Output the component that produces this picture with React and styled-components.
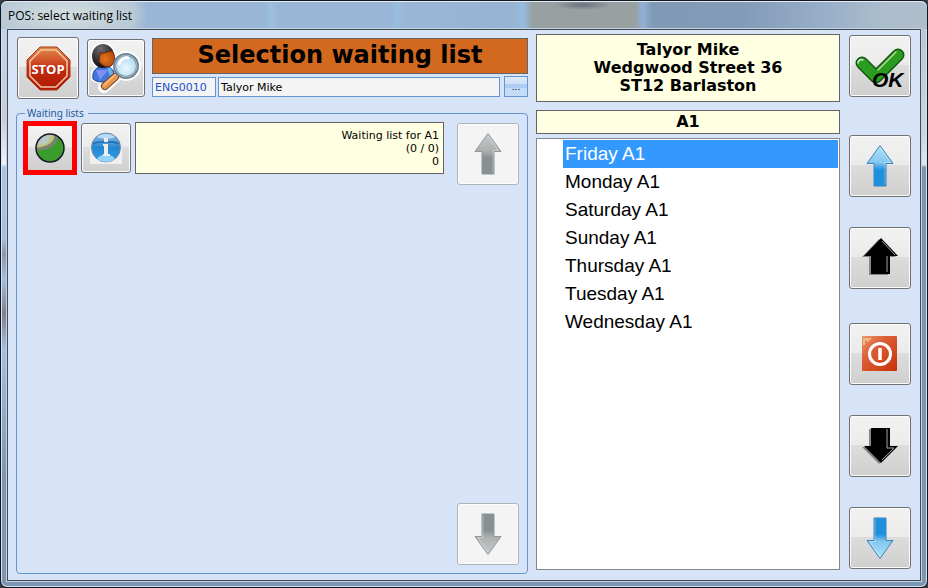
import { useState } from 'react';
import styled, { createGlobalStyle, css } from 'styled-components';

const GlobalStyle = createGlobalStyle`
    * {
        box-sizing: border-box;
    }

    body {
        margin: 0;
        background: #3a3d44;
        font-family: "DejaVu Sans", Verdana, sans-serif;
        font-size: 11px;
        color: #000;
    }
`;

const Window = styled.div`
    display: flex;
    flex-direction: column;
    min-height: 100vh;
    border: 1px solid #14161f;
    border-radius: 7px;
    box-shadow: inset 0 0 0 1px #d3e2ee;
    background:
        linear-gradient(180deg, #b9c8d8 0, #c9d6e2 100px, #dbe7f0 136px, #7c97b3 138px, #7c97b3 100%) right 1px top 28px / 6px 100% no-repeat,
        linear-gradient(180deg, #c3d3f0 0, #c8ccd8 90px, #eef3fa 135px, #a9c6e8 138px, #a3bfe2 210px, #8c97ac 225px, #a3bfe2 250px, #857f8c 285px, #a3bfe2 320px, #7d95b0 450px) left 1px top 28px / 6px 100% no-repeat,
        #7c97b3;
`;

const TitleBar = styled.header`
    display: flex;
    align-items: center;
    flex: none;
    height: 28px;
    margin: 0;
    padding-left: 7px;
    border-radius: 6px 6px 0 0;
    box-shadow: inset 0 1px 0 #e4edf5;
    font-family: "Open Sans", "Segoe UI", sans-serif;
    font-size: 12px;
    background:
        radial-gradient(ellipse 80px 24px at 66px 14px, #d5dfe0 0, #c6d4dac0 60%, #c6d4da00 100%),
        radial-gradient(ellipse 28px 5px at 582px 4px, #6d707c 0, #6d707c00 100%),
        linear-gradient(90deg, #b4c6d6 0, #b4c6d6 132px, #9ab6d6 146px, #9ab6d6 264px, #9cc0e0 270px, #9ab6d6 278px, #9ab6d6 390px, #96bfe0 396px, #9ab6d6 404px, #98b4d4 514px, #94bce0 522px, #98a0a2 532px, #98a0a2 634px, #90b0d6 642px, #8099b4 652px, #829bb8 740px, #9ab0ca 830px, #abbccc 880px, #afbecd 100%);
`;

const Client = styled.main`
    display: flex;
    flex: 1;
    gap: 8px;
    margin: 0 6px 6px;
    padding: 4px 9px 6px 8px;
    border: 1px solid #414a55;
    box-shadow: 0 0 0 1px #c4d4df;
    background: #d7e4f7;
`;

const LeftColumn = styled.section`
    display: flex;
    flex-direction: column;
    flex: 1;
    min-width: 0;
    padding-top: 3px;
`;

const MiddleColumn = styled.section`
    display: flex;
    flex-direction: column;
    flex: none;
    width: 304px;
    padding-bottom: 4px;
`;

const SideColumn = styled.nav`
    display: flex;
    flex-direction: column;
    justify-content: space-between;
    flex: none;
    padding: 1px 0 5px 1px;
`;

const SideGroup = styled.div`
    display: flex;
    flex-direction: column;
    gap: 30px;
    padding-top: ${props => props.$spaced ? "4px" : "0"};
`;

const IconButton = styled.button`
    display: flex;
    align-items: center;
    justify-content: center;
    flex: none;
    width: ${props => props.$size || 62}px;
    height: ${props => props.$size || 62}px;
    padding: 0;
    border: 1px solid #707070;
    border-radius: 3px;
    box-shadow: inset 0 0 0 1px #fcfcfc;
    background: linear-gradient(#f2f2f2 0, #ebebeb 48%, #dddddd 49%, #cfcfcf 100%);

    &:disabled {
        border-color: #adb2b5;
        background: #f4f4f4;
    }

    ${props => props.$marked && css`
        border: 5px solid #ff0000;
        border-radius: 0;
        box-shadow: none;
    `}
`;

const Header = styled.div`
    display: flex;
    align-items: center;
    gap: 8px;
    padding-left: 1px;
`;

const HeaderFields = styled.div`
    align-self: flex-start;
    flex: 1;
    min-width: 0;
    margin-left: -1px;
    padding-top: 1px;
`;

const Title = styled.h1`
    height: 36px;
    margin: 0 0 2px;
    border: 1px solid #646464;
    background: #d2691e;
    font-size: 24px;
    line-height: 32px;
    text-align: center;
`;

const CustomerRow = styled.div`
    display: flex;
    align-items: flex-end;
    gap: 2px;
`;

const TextField = styled.input`
    width: ${props => props.$wide ? "auto" : "64px"};
    flex: ${props => props.$wide ? "1" : "none"};
    min-width: 0;
    height: 20px;
    padding: 0 2px;
    border: 1px solid #6593cf;
    background: #f4f4f4;
    color: ${props => props.$wide ? "#000" : "#1e50c8"};
    font-family: inherit;
    font-size: 11px;
`;

const BrowseButton = styled.button`
    width: 24px;
    height: 21px;
    margin-left: 2px;
    padding: 0;
    border: 1px solid #6593cf;
    background: linear-gradient(#dce9f9 0, #cfe1f7 35%, #abcdf2 36%, #abcdf2 56%, #c3dcf8 57%, #c3dcf8 100%);
    font-family: inherit;
    font-size: 9px;
`;

const WaitingLists = styled.fieldset`
    display: flex;
    flex: 1;
    gap: 13px;
    min-width: 0;
    margin: 7px 0 0;
    padding: 1px 8px 8px 6px;
    border: 1px solid #6593cf;
    border-radius: 4px;
`;

const Legend = styled.legend`
    margin-left: 2px;
    padding: 0 4px 0 2px;
    color: #1e5a96;
    font-family: "Noto Sans", "Segoe UI", sans-serif;
    font-size: 10px;
    line-height: 14px;
`;

const WaitingRow = styled.div`
    display: flex;
    align-items: center;
    align-self: flex-start;
    flex: 1;
    gap: 4px;
`;

const WaitingInfo = styled.div`
    flex: 1;
    height: 52px;
    padding: 6px 4px;
    border: 1px solid #646464;
    background: #ffffe1;
    line-height: 13px;
    text-align: right;
`;

const Scroller = styled.div`
    display: flex;
    flex-direction: column;
    justify-content: space-between;
    padding-top: 2px;
`;

const Address = styled.address`
    height: 68px;
    padding: 6px;
    border: 1px solid #646464;
    background: #ffffe1;
    font-size: 16px;
    font-style: normal;
    font-weight: bold;
    line-height: 18px;
    text-align: center;
`;

const ListTitle = styled.h2`
    height: 24px;
    margin: 8px 0 4px;
    border: 1px solid #646464;
    background: #ffffe1;
    font-size: 16px;
    line-height: 22px;
    text-align: center;
`;

const DayList = styled.ul`
    flex: 1;
    margin: 0;
    padding: 1px 1px 1px 26px;
    border: 1px solid #828790;
    background: #fff;
    list-style: none;
    font-family: "Liberation Sans", Arial, sans-serif;
    font-size: 19px;
    line-height: 28px;
`;

const Day = styled.li`
    padding-left: 2px;
    cursor: default;
    background: ${props => props.$active ? "#3399ff" : "transparent"};
    color: ${props => props.$active ? "#fff" : "#000"};
`;

function StopIcon() {
    return <svg width="60" height="60" viewBox="1 1 60 60">
        <defs>
            <linearGradient id="stop" x1="0" y1="0" x2="0" y2="1">
                <stop offset="0" stopColor="#e08a48" />
                <stop offset="0.3" stopColor="#d4552c" />
                <stop offset="0.5" stopColor="#c02c10" />
                <stop offset="1" stopColor="#b01804" />
            </linearGradient>
        </defs>
        <path d="M23 10H40L53 23V40L40 53H23L10 40V23Z" fill="url(#stop)" stroke="#a83a1c" />
        <path d="M24 13H39L50 24V39L39 50H24L13 39V24Z" fill="none" stroke="#f0c8a8" strokeWidth="1.5" />
        <text x="31" y="37" textAnchor="middle" fill="#fff" fontFamily="'Open Sans', 'Noto Sans', sans-serif" fontWeight="bold" fontSize="13">STOP</text>
    </svg>;
}

function FindPersonIcon() {
    return <svg width="50" height="50" viewBox="0 0 50 50">
        <defs>
            <radialGradient id="hair" cx="0.4" cy="0.2" r="0.7">
                <stop offset="0" stopColor="#6c6c70" />
                <stop offset="1" stopColor="#18181c" />
            </radialGradient>
            <radialGradient id="face" cx="0.4" cy="0.5" r="0.6">
                <stop offset="0" stopColor="#e07820" />
                <stop offset="1" stopColor="#b8480c" />
            </radialGradient>
            <radialGradient id="lens" cx="0.5" cy="0.6" r="0.6">
                <stop offset="0" stopColor="#eefaff" />
                <stop offset="1" stopColor="#a4d4f0" />
            </radialGradient>
        </defs>
        <g fill="#fff" stroke="#fff" strokeWidth="4" strokeLinejoin="round">
            <ellipse cx="12" cy="13" rx="11" ry="12" />
            <path d="M2 36V29L8 24H18L24 32L18 38H6Z" />
            <circle cx="35" cy="23" r="13" />
            <path d="M24 34L13 44" strokeWidth="12" strokeLinecap="round" />
        </g>
        <path d="M2 36C1 29 4 25 9 24H18C23 26 24 32 22 36C16 40 6 40 2 36Z" fill="#4078e0" stroke="#28408c" />
        <path d="M5 27L9 37L17 27Z" fill="#8090f0" />
        <path d="M18 25L21 33" stroke="#68b4e8" strokeWidth="4" />
        <ellipse cx="12" cy="13" rx="11" ry="12" fill="url(#hair)" />
        <path d="M9 10C13 11 17 8 21 8C25 12 24 20 20 23C15 25 10 22 8 18Z" fill="url(#face)" stroke="#702808" />
        <path d="M24 34L14 43" stroke="#70442c" strokeWidth="8" strokeLinecap="round" />
        <path d="M24 34L14 43" stroke="#e8944c" strokeWidth="6" strokeLinecap="round" />
        <path d="M24 32L13 42" stroke="#fcc48c" strokeWidth="1.5" strokeLinecap="round" />
        <circle cx="35" cy="23" r="11.5" fill="url(#lens)" stroke="#6c8090" strokeWidth="3" />
        <circle cx="35" cy="23" r="11" fill="none" stroke="#a8bcc8" />
        <path d="M28 21C29 17 33 14 37 15" fill="none" stroke="#fff" strokeWidth="3" strokeLinecap="round" />
    </svg>;
}

function BallIcon() {
    return <svg width="30" height="30" viewBox="0 0 30 30">
        <defs>
            <clipPath id="ballClip"><circle cx="15" cy="15" r="14" /></clipPath>
        </defs>
        <circle cx="15" cy="15" r="14" fill="#3a9c2c" />
        <g clipPath="url(#ballClip)">
            <path d="M0 0H22C25 10 18 17 0 18Z" fill="#788470" />
            <path d="M0 0H19C21 8 14 14 0 15Z" fill="#c0c47c" />
            <path d="M2 0H15C16 7 12 12 4 12Z" fill="#b8c8c8" />
        </g>
        <circle cx="15" cy="15" r="14" fill="none" stroke="#18182c" strokeWidth="1.5" />
    </svg>;
}

function InfoIcon() {
    return <svg width="32" height="32" viewBox="0 0 32 32">
        <defs>
            <linearGradient id="info" x1="0" y1="0" x2="0" y2="1">
                <stop offset="0" stopColor="#8cbce4" />
                <stop offset="0.35" stopColor="#5898d4" />
                <stop offset="0.5" stopColor="#2088d0" />
                <stop offset="1" stopColor="#3c9ce8" />
            </linearGradient>
        </defs>
        <path d="M0 16H32V32H0Z" fill="#f0f0f0" />
        <circle cx="16" cy="15.5" r="14.5" fill="url(#info)" stroke="#6c88a8" />
        <path d="M7 27C10 21 22 21 25 27C20 31 12 31 7 27Z" fill="#90d4fc" />
        <path d="M3 12C8 9 24 9 29 12" fill="none" stroke="#1c78c0" strokeWidth="2" />
        <path d="M7 5C11 1 21 1 25 5C20 7 12 7 7 5Z" fill="#b8dcf4" />
        <path d="M14 6H18V10H14ZM13 12H18V22H20V24H13V22H14V14H13Z" fill="#ececec" />
    </svg>;
}

function OkIcon() {
    return <svg width="60" height="60" viewBox="1 1 60 60">
        <g fill="none" strokeLinecap="round" strokeLinejoin="round">
            <path d="M13 28L27 42L49 20" stroke="#105810" strokeWidth="13" />
            <path d="M13 28L27 42L49 20" stroke="#2c9c20" strokeWidth="10" />
            <path d="M9 28C9 25 12 24 14 25" stroke="#d0ecc8" strokeWidth="1.5" />
            <path d="M29 35L47 17" stroke="#b8d898" strokeWidth="1.5" />
        </g>
        <text x="23" y="52" fontFamily="'Liberation Sans', Arial, sans-serif" fontStyle="italic" fontWeight="bold" fontSize="21">OK</text>
    </svg>;
}

const arrowColors = {
    blue: { from: "#b0e0f8", mid: "#84c8f0", to: "#2090dc", edge: "#3c84bc" },
    gray: { from: "#c0ccd0", mid: "#b0b0b0", to: "#889094", edge: "#8c989c" },
};

function ArrowIcon({color, down}) {
    const { from, mid, to, edge } = arrowColors[color];
    const id = `arrow-${color}-${down ? "down" : "up"}`;
    return <svg width="60" height="60" viewBox="1 1 60 60">
        <defs>
            <linearGradient id={id} x1="0" y1="0" x2="0" y2="1">
                <stop offset="0" stopColor={from} />
                <stop offset="0.42" stopColor={mid} />
                <stop offset="0.6" stopColor={to} />
                <stop offset="1" stopColor={to} />
            </linearGradient>
        </defs>
        <g transform={down ? "rotate(180 31 31)" : undefined}>
            <path d="M31 10.5L44 28.5H37V51H25V28.5H18Z" fill={`url(#${id})`} stroke={edge} />
            <path d="M31 12.5L41.5 27.5H36V50" fill="none" stroke="#fff" strokeOpacity="0.35" />
        </g>
    </svg>;
}

function BlackArrowIcon({down}) {
    const shape = down ? "M22 13H41V31H49L32 48L15 31H22Z" : "M32 11L49 29H41V47H22V29H15Z";
    return <svg width="60" height="60" viewBox="1 1 60 60">
        <path d={shape} fill="#84888c" transform="translate(-2 1)" />
        <path d={shape} fill="#000" />
        <path d={down ? "M38 14V33H45L33 45" : "M33 14L46 28M38 29V45"} fill="none" stroke="#a0a4a8" />
    </svg>;
}

function PowerIcon() {
    return <svg width="60" height="60" viewBox="1 1 60 60">
        <defs>
            <linearGradient id="power" x1="0" y1="0" x2="1" y2="1">
                <stop offset="0" stopColor="#e89868" />
                <stop offset="0.35" stopColor="#dc6038" />
                <stop offset="1" stopColor="#c83008" />
            </linearGradient>
        </defs>
        <rect x="13" y="13" width="35" height="35" rx="1" fill="url(#power)" />
        <path d="M14 15H23L19 19L16 17V22H14Z" fill="#f0b888" />
        <circle cx="31" cy="31" r="10.5" fill="none" stroke="#fff" strokeWidth="3" />
        <path d="M31 25V37" stroke="#fff" strokeWidth="3.5" />
    </svg>;
}

const days = ["Friday A1", "Monday A1", "Saturday A1", "Sunday A1", "Thursday A1", "Tuesday A1", "Wednesday A1"];

export default function App() {
    const [selected, setSelected] = useState(0);

    const move = (index) => setSelected(Math.max(0, Math.min(days.length - 1, index)));

    return <>
        <GlobalStyle />
        <Window>
            <TitleBar>POS: select waiting list</TitleBar>
            <Client>
                <LeftColumn>
                    <Header>
                        <IconButton aria-label="Stop"><StopIcon /></IconButton>
                        <IconButton aria-label="Find customer" $size={58}><FindPersonIcon /></IconButton>
                        <HeaderFields>
                            <Title>Selection waiting list</Title>
                            <CustomerRow>
                                <TextField aria-label="Customer code" defaultValue="ENG0010" />
                                <TextField aria-label="Customer name" defaultValue="Talyor Mike" $wide />
                                <BrowseButton aria-label="Browse">...</BrowseButton>
                            </CustomerRow>
                        </HeaderFields>
                    </Header>
                    <WaitingLists>
                        <Legend>Waiting lists</Legend>
                        <WaitingRow>
                            <IconButton aria-label="Select waiting list" $size={54} $marked><BallIcon /></IconButton>
                            <IconButton aria-label="Information" $size={50}><InfoIcon /></IconButton>
                            <WaitingInfo>
                                <div>Waiting list for A1</div>
                                <div>(0 / 0)</div>
                                <div>0</div>
                            </WaitingInfo>
                        </WaitingRow>
                        <Scroller>
                            <IconButton aria-label="Scroll up" disabled><ArrowIcon color="gray" /></IconButton>
                            <IconButton aria-label="Scroll down" disabled><ArrowIcon color="gray" down /></IconButton>
                        </Scroller>
                    </WaitingLists>
                </LeftColumn>
                <MiddleColumn>
                    <Address>
                        Talyor Mike<br />
                        Wedgwood Street 36<br />
                        ST12 Barlaston
                    </Address>
                    <ListTitle>A1</ListTitle>
                    <DayList role="listbox" aria-label="A1" tabIndex={0}>
                        {days.map((day, index) =>
                            <Day
                                key={day}
                                role="option"
                                aria-selected={index === selected}
                                $active={index === selected}
                                onClick={() => setSelected(index)}
                            >
                                {day}
                            </Day>
                        )}
                    </DayList>
                </MiddleColumn>
                <SideColumn>
                    <SideGroup>
                        <IconButton aria-label="OK"><OkIcon /></IconButton>
                    </SideGroup>
                    <SideGroup $spaced>
                        <IconButton aria-label="First" onClick={() => move(0)}><ArrowIcon color="blue" /></IconButton>
                        <IconButton aria-label="Previous" onClick={() => move(selected - 1)}><BlackArrowIcon /></IconButton>
                    </SideGroup>
                    <SideGroup>
                        <IconButton aria-label="Power"><PowerIcon /></IconButton>
                        <IconButton aria-label="Next" onClick={() => move(selected + 1)}><BlackArrowIcon down /></IconButton>
                        <IconButton aria-label="Last" onClick={() => move(days.length - 1)}><ArrowIcon color="blue" down /></IconButton>
                    </SideGroup>
                </SideColumn>
            </Client>
        </Window>
    </>;
}
